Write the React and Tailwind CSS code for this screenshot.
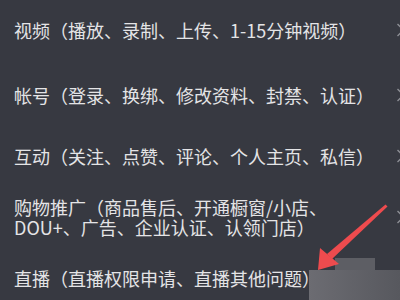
import React from "react"

const rows = [
  { h: "h-[60px]", lines: ["视频（播放、录制、上传、1-15分钟视频）"] },
  { h: "h-[70px]", lines: ["帐号（登录、换绑、修改资料、封禁、认证）"] },
  { h: "h-[51px]", lines: ["互动（关注、点赞、评论、个人主页、私信）"] },
  { h: "h-[72px]", lines: ["购物推广（商品售后、开通橱窗/小店、", "DOU+、广告、企业认证、认领门店）"] },
  { h: "h-[50px]", lines: ["直播（直播权限申请、直播其他问题）"] },
]

function Chevron() {
  return (
    <svg width="10" height="14" viewBox="0 0 10 14" className="shrink-0 -mr-[6px]">
      <path d="M1.5 1 L7.5 7 L1.5 13" fill="none" stroke="#8d8f95" strokeWidth="1.4" />
    </svg>
  )
}

export default function App() {
  return (
    <div
      className="relative w-[400px] h-[300px] overflow-hidden bg-[#373941] text-[#e4e4e6]"
      style={{ fontFamily: '"Noto Sans CJK SC", "Noto Sans", sans-serif' }}
    >
      <div className="flex flex-col">
        {rows.map((row, i) => (
          <div key={i} className={`${row.h} flex items-center justify-between pl-[14px] shrink-0`}>
            <div className="text-[18px] leading-[20px] whitespace-nowrap">
              {row.lines.map((l, j) => (
                <div key={j}>{l}</div>
              ))}
            </div>
            <Chevron />
          </div>
        ))}
      </div>

      {/* blurred patch */}
      <div className="absolute left-[335px] top-[258px] w-[40px] h-[14px] bg-[#5d5e64]" />
      <div className="absolute left-[309px] top-[270px] w-[91px] h-[30px] bg-gradient-to-r from-[#6c6c72] to-[#57585e]" />

      {/* red arrow */}
      <svg className="absolute left-0 top-0" width="400" height="300" viewBox="0 0 400 300">
        <path d="M385.5 204.5 L387.5 206.5 L332 259 L327 254 Z" fill="#ee4b4e" />
        <path d="M318 270 L320 248 L339 264 Z" fill="#ee4b4e" />
      </svg>
    </div>
  )
}
